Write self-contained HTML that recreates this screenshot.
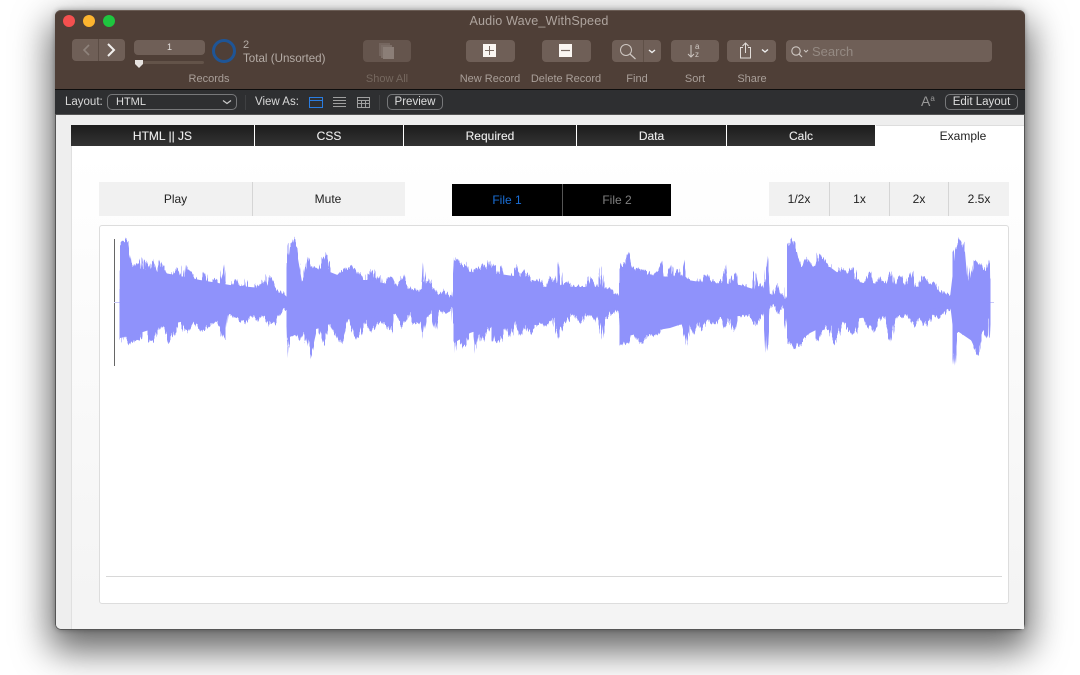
<!DOCTYPE html>
<html><head><meta charset="utf-8"><style>
html,body{margin:0;padding:0;width:1080px;height:675px;overflow:hidden;background:#fff;font-family:"Liberation Sans",sans-serif}
.a{position:absolute}
#wrap{position:absolute;left:0;top:0;width:1080px;height:675px;filter:blur(.35px)}
#win{left:55px;top:10px;width:970px;height:620px;border-radius:6px;box-shadow:0 16px 36px 5px rgba(0,0,0,.6),0 0 6px rgba(0,0,0,.3)}
.b{position:absolute;background:#6f5f57;border-radius:4px}
.l{position:absolute;font-size:11px;color:#a99f99;text-align:center;white-space:nowrap}
.t{position:absolute;top:125px;height:21px;line-height:22px;background:linear-gradient(#1c1c1c,#333);color:#eee;font-size:12px;text-align:center;-webkit-text-stroke:.1px #eee}
.g{position:absolute;background:#f1f1f1;color:#222;font-size:12px;text-align:center;top:182px;height:34px;line-height:35px}
.k{position:absolute;background:#000;font-size:12px;text-align:center;top:184px;height:32px;line-height:33px}
.w{position:absolute;font-size:11.5px;color:#d8d8d8;white-space:nowrap}
.o{position:absolute;border:1px solid #77787a;border-radius:4px;color:#dedede;font-size:11.5px;text-align:center;box-sizing:border-box}
</style></head><body>
<div id="wrap">
<div class="a" id="win"></div>
<div class="a" style="left:55px;top:10px;width:970px;height:620px;border-radius:6px;overflow:hidden;background:#f5f5f5;box-shadow:inset 0 0 0 1px #555"></div>
<div class="a" style="left:55px;top:10px;width:970px;height:79px;background:#4f3f37;border-radius:6px 6px 0 0;border-top:1px solid #6a5c54;box-sizing:border-box"></div>
<div class="a" style="left:55px;top:89px;width:970px;height:1px;background:#0d0d0d"></div>
<div class="a" style="left:55px;top:90px;width:970px;height:24px;background:#2e2f31"></div>
<div class="a" style="left:56px;top:114px;width:968px;height:1px;background:#555"></div>
<div class="a" style="left:56px;top:115px;width:968px;height:514px;background:#eeeeee;border-radius:0 0 5px 5px"></div>
<div class="a" style="left:71px;top:125px;width:953px;height:504px;background:linear-gradient(#fff 0,#fff 30px,#f4f4f4 480px);border-left:1px solid #e0e0e0;box-sizing:border-box"></div>

<div class="a" style="left:63px;top:15px;width:12px;height:12px;border-radius:50%;background:#f4504f"></div>
<div class="a" style="left:83px;top:15px;width:12px;height:12px;border-radius:50%;background:#fdb42f"></div>
<div class="a" style="left:103px;top:15px;width:12px;height:12px;border-radius:50%;background:#1fc63f"></div>
<div class="a" style="left:300px;top:14px;width:478px;text-align:center;font-size:12.6px;color:#aea49e;letter-spacing:.15px">Audio Wave_WithSpeed</div>

<div class="b" style="left:72px;top:39px;width:53px;height:22px"></div>
<div class="a" style="left:98px;top:39px;width:1px;height:22px;background:#5b4c44"></div>
<svg class="a" style="left:72px;top:39px" width="53" height="22" fill="none"><path d="M17 6l-5 5 5 5" stroke="#8f837c" stroke-width="1.6"/><path d="M36 5l6 6-6 6" stroke="#f2f0ee" stroke-width="2"/></svg>
<div class="b" style="left:134px;top:40px;width:71px;height:15px;text-align:center;font-size:9px;line-height:15px;color:#e5e0dd">1</div>
<div class="a" style="left:139px;top:61px;width:65px;height:3px;background:#635349;border-radius:2px"></div>
<svg class="a" style="left:134px;top:59px" width="10" height="10"><path d="M1 1h8v4l-4 4-4-4z" fill="#e6e2df"/></svg>
<div class="a" style="left:212px;top:39px;width:24px;height:24px;border:3px solid #1f5596;border-radius:50%;box-sizing:border-box"></div>
<div class="l" style="left:243px;top:39px;color:#b5aca6">2</div>
<div class="l" style="left:243px;top:52px;font-size:11.6px;line-height:14px;color:#b5aca6">Total (Unsorted)</div>
<div class="l" style="left:169px;top:72px;width:80px;line-height:14px">Records</div>

<div class="b" style="left:363px;top:40px;width:48px;height:22px;background:#65554d"></div>
<svg class="a" style="left:363px;top:40px" width="48" height="22"><rect x="16" y="3" width="11" height="13" fill="#75665f"/><rect x="18" y="5" width="11" height="13" fill="#7c6e67"/><rect x="20" y="7" width="11" height="12" fill="#8b7e77"/></svg>
<div class="l" style="left:347px;top:72px;width:80px;line-height:14px;color:#75685f">Show All</div>

<div class="b" style="left:466px;top:40px;width:49px;height:22px"></div>
<svg class="a" style="left:466px;top:40px" width="49" height="22"><rect x="17" y="4" width="13" height="13" fill="#faf6f2"/><path d="M23.500 6v9M19 10.500h9" stroke="#7a6c64" stroke-width="1"/></svg>
<div class="l" style="left:450px;top:72px;width:80px;line-height:14px">New Record</div>
<div class="b" style="left:542px;top:40px;width:49px;height:22px"></div>
<svg class="a" style="left:542px;top:40px" width="49" height="22"><rect x="17" y="4" width="13" height="13" fill="#faf6f2"/><path d="M19 10.500h9" stroke="#7a6c64" stroke-width="1.200"/></svg>
<div class="l" style="left:526px;top:72px;width:80px;line-height:14px">Delete Record</div>

<div class="b" style="left:612px;top:40px;width:49px;height:22px"></div>
<div class="a" style="left:643px;top:40px;width:1px;height:22px;background:#5f5047"></div>
<svg class="a" style="left:612px;top:40px" width="49" height="22" fill="none"><circle cx="14" cy="10" r="5.500" stroke="#cfc8c3" stroke-width="1"/><path d="M18 14l5.500 5" stroke="#cfc8c3" stroke-width="1.200"/><path d="M37 10l3 2.500 3-2.500" stroke="#eee" stroke-width="1.400"/></svg>
<div class="l" style="left:597px;top:72px;width:80px;line-height:14px">Find</div>

<div class="b" style="left:671px;top:40px;width:48px;height:22px"></div>
<svg class="a" style="left:671px;top:40px" width="48" height="22" fill="none"><path d="M20 5v12M17 14l3 3 3-3" stroke="#cfc8c3" stroke-width="1"/></svg>
<div class="a" style="left:695px;top:43px;font-size:8px;line-height:7.500px;color:#cfc8c3">a<br>z</div>
<div class="l" style="left:655px;top:72px;width:80px;line-height:14px">Sort</div>

<div class="b" style="left:727px;top:40px;width:49px;height:22px"></div>
<svg class="a" style="left:727px;top:40px" width="49" height="22" fill="none"><path d="M16 7.500h-2.500v10.500h10V7.500H21M18.500 13V3.500M15.500 6l3-3 3 3" stroke="#e2ddd9" stroke-width="1"/><path d="M35 9.500l3 2.500 3-2.500" stroke="#eee" stroke-width="1.400"/></svg>
<div class="l" style="left:712px;top:72px;width:80px;line-height:14px">Share</div>

<div class="b" style="left:786px;top:40px;width:206px;height:22px"></div>
<svg class="a" style="left:786px;top:40px" width="30" height="22" fill="none"><circle cx="10" cy="11" r="4.200" stroke="#cfc8c3" stroke-width="1.100"/><path d="M13 14l3 3" stroke="#cfc8c3" stroke-width="1.200"/><path d="M18 10l2 2 2-2" stroke="#cfc8c3"/></svg>
<div class="a" style="left:812px;top:44px;font-size:13px;color:#958a83">Search</div>

<div class="w" style="left:65px;top:96px">Layout:</div>
<div class="o" style="left:107px;top:94px;width:130px;height:16px;line-height:14px;text-align:left;padding-left:8px;border-radius:5px;font-size:11px">HTML</div>
<svg class="a" style="left:222px;top:99px" width="10" height="7" fill="none"><path d="M1 1.500l4 3 4-3" stroke="#ccc" stroke-width="1.200"/></svg>
<div class="a" style="left:245px;top:95px;width:1px;height:15px;background:#3f4042"></div>
<div class="w" style="left:255px;top:96px">View As:</div>
<svg class="a" style="left:308px;top:96px" width="66" height="12" fill="none"><rect x="1.500" y="1.500" width="13" height="10" stroke="#2a7de1"/><path d="M1 4.500h14" stroke="#2a7de1"/><path d="M25 1.500h13M25 4.500h13M25 7.500h13M25 10.500h13" stroke="#a0a0a0"/><rect x="49.500" y="1.500" width="12" height="10" stroke="#a0a0a0"/><path d="M49 4.500h13M49 7.500h13M53.500 4v8M57.500 4v8" stroke="#a0a0a0"/></svg>
<div class="a" style="left:379px;top:95px;width:1px;height:15px;background:#3f4042"></div>
<div class="o" style="left:387px;top:94px;width:56px;height:16px;line-height:14px;border-radius:5px">Preview</div>
<div class="a" style="left:921px;top:93px;font-size:14px;color:#999">A<span style="font-size:8px;vertical-align:5px">a</span></div>
<div class="o" style="left:945px;top:94px;width:73px;height:16px;line-height:14px;border-radius:5px">Edit Layout</div>

<div class="t" style="left:71px;width:183px">HTML || JS</div>
<div class="t" style="left:255px;width:148px">CSS</div>
<div class="t" style="left:404px;width:172px">Required</div>
<div class="t" style="left:577px;width:149px">Data</div>
<div class="t" style="left:727px;width:148px">Calc</div>
<div class="a" style="left:876px;top:125px;width:148px;height:22px;line-height:21px;background:#fff;color:#222;font-size:12px;text-align:center;padding-left:26px;border-top:1px solid #ddd;box-sizing:border-box">Example</div>

<div class="g" style="left:99px;width:153px">Play</div>
<div class="g" style="left:252px;width:153px;border-left:1px solid #d5d5d5;box-sizing:border-box;padding-right:2px">Mute</div>
<div class="k" style="left:452px;width:110px;color:#1a6fd8">File 1</div>
<div class="k" style="left:563px;width:108px;color:#808080">File 2</div>
<div class="a" style="left:562px;top:184px;width:1px;height:32px;background:#555"></div>
<div class="a" style="left:769px;top:182px;width:240px;height:34px;background:#d5d5d5"></div>
<div class="g" style="left:769px;width:60px">1/2x</div>
<div class="g" style="left:830px;width:59px">1x</div>
<div class="g" style="left:890px;width:58px">2x</div>
<div class="g" style="left:949px;width:60px">2.5x</div>

<div class="a" style="left:99px;top:225px;width:910px;height:379px;background:#fff;border:1px solid #ddd;border-radius:3px;box-sizing:border-box"></div>
<div class="a" style="left:106px;top:576px;width:896px;height:1px;background:#d8d8d8"></div>
<div class="a" style="left:114px;top:239px;width:1px;height:127px;background:#666"></div>
<div class="a" style="left:114px;top:302px;width:880px;height:1px;background:#c9caf8"></div>

<svg class="a" style="left:0;top:0" width="1080" height="675">
<defs><filter id="j" x="100" y="220" width="900" height="160" filterUnits="userSpaceOnUse"><feTurbulence type="fractalNoise" baseFrequency="0.55 0.004" numOctaves="2" seed="4"/><feDisplacementMap in="SourceGraphic" scale="9" xChannelSelector="A" yChannelSelector="R"/></filter></defs>
<g fill="#8f92fb" filter="url(#j)">
<polygon transform="translate(100 225) scale(.33333)" points="62,230 62,50 85,45 95,120 115,115 122,92 130,160 135,105 150,130 160,97 170,140 180,105 190,130 200,145 207,180 215,155 230,125 240,150 245,122 252,170 258,120 270,140 290,165 300,178 312,140 320,170 335,180 340,158 350,165 360,185 372,120 380,185 395,185 405,160 415,175 430,185 437,155 445,195 460,195 470,175 480,180 490,165 497,185 505,150 520,170 530,195 550,205 558,210 562,100 570,60 582,42 592,70 605,175 612,150 622,95 632,125 645,125 655,135 668,100 680,85 690,130 697,165 715,150 725,135 740,130 755,122 770,140 790,155 795,190 805,150 815,130 825,160 840,155 845,190 860,160 875,155 890,185 901,165 901,290 882,265 875,320 860,300 840,290 815,320 795,290 775,340 760,335 745,275 725,355 705,330 690,290 670,360 650,295 645,340 632,400 612,320 605,340 585,335 570,320 563,415 558,250 550,255 525,295 510,300 490,270 470,290 455,270 440,295 420,285 400,275 385,270 378,340 370,340 350,285 325,305 310,315 295,310 280,290 265,322 250,310 240,280 225,320 205,360 190,300 175,315 165,345 150,350 140,330 130,285 125,338 88,355 70,330 62,360"/>
<polygon transform="translate(400 225) scale(.33333)" points="0,170 10,150 15,175 30,190 50,195 65,190 70,110 75,175 85,165 100,185 118,212 130,198 145,208 158,215 165,97 175,105 190,125 200,110 210,145 225,130 240,130 250,115 260,135 268,105 275,125 285,120 295,155 305,120 320,175 335,155 350,120 360,150 370,135 385,150 400,170 415,160 435,185 450,155 465,170 475,105 485,180 505,170 515,190 530,180 555,190 568,155 580,165 590,185 602,122 612,185 630,190 645,208 658,205 662,120 675,118 685,80 695,130 715,130 735,135 755,150 775,140 785,105 795,170 812,120 820,155 835,130 845,155 852,100 860,155 885,185 901,155 901,290 885,330 870,300 858,360 845,300 825,290 805,300 790,295 770,335 745,330 725,355 695,320 680,355 663,360 658,255 640,265 615,280 605,345 590,280 560,270 540,295 515,265 485,310 475,350 460,285 435,300 410,295 395,325 375,300 360,340 345,290 330,340 320,310 300,350 280,350 270,300 250,350 240,330 228,385 218,295 200,355 185,370 175,330 165,385 158,248 140,265 115,260 105,310 95,260 80,280 70,345 60,285 40,300 25,265 15,290 0,310"/>
<polygon transform="translate(700 225) scale(.33333)" points="0,175 15,145 35,165 55,175 65,165 78,115 85,185 95,165 107,145 115,185 135,180 155,205 167,140 175,180 195,190 202,95 212,215 230,175 240,205 258,218 262,60 280,45 295,100 305,130 320,95 335,120 345,125 358,85 375,105 390,130 400,160 425,125 440,145 458,125 470,160 490,180 510,140 520,175 540,160 560,175 575,135 585,180 602,150 615,185 635,140 650,200 668,150 690,175 705,170 715,195 755,212 762,80 780,42 790,60 805,190 820,105 845,120 855,145 868,100 870,228 870,235 865,345 850,310 832,395 812,340 800,330 770,320 762,415 755,245 720,280 700,270 675,305 660,280 645,305 620,270 585,280 573,350 550,270 520,320 500,300 485,270 465,325 445,320 430,290 405,360 385,305 365,320 350,350 335,285 310,350 288,368 262,350 250,245 235,268 220,240 210,250 202,380 195,255 170,300 150,275 115,270 105,320 90,280 75,310 60,275 50,300 20,285 0,320"/>
</g>
<g fill="#8f92fb">
<polygon points="120,245 128,250 132,267 170,274 200,280 230,285 270,289 286,297 286,307 270,316 230,314 200,320 170,323 140,333 120,338"/>
<polygon points="287,272 290,247 296,247 302,282 310,270 330,272 350,280 370,280 400,287 420,292 452,298 452,306 420,310 400,313 370,318 340,320 320,328 300,333 287,338"/>
<polygon points="454,260 470,272 500,274 520,277 540,287 570,287 600,287 618,296 618,308 580,313 540,316 500,323 470,333 454,343"/>
<polygon points="621,270 640,274 670,277 700,282 740,285 770,294 785,299 785,304 770,303 740,316 700,318 670,328 640,333 621,338"/>
<polygon points="788,252 797,252 800,267 815,267 830,267 850,282 880,284 920,287 950,297 953,272 958,244 965,252 968,287 975,267 989,272 989,318 985,328 975,343 953,328 950,304 920,313 890,316 860,318 830,323 810,333 797,343 788,338"/>
</g></svg>
</div>
</body></html>
